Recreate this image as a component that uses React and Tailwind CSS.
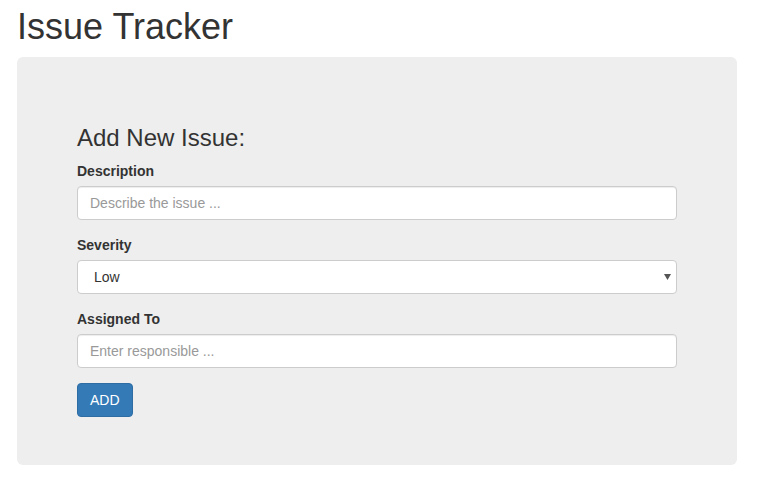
export default function App() {
  return (
    <div className="min-h-[479px] bg-white text-[#333] text-sm" style={{ fontFamily: '"Liberation Sans", Arial, sans-serif' }}>
      <div className="pl-[17px] pt-[7px]">
        <h1 className="text-[36px] leading-[40px] mb-[10px] font-normal">Issue Tracker</h1>
        <div className="w-[720px] bg-[#eeeeee] rounded-[6px] px-[60px] pt-[48px] pb-[48px]">
          <h3 className="text-[24px] leading-[26.4px] mt-[20px] mb-[10px]">Add New Issue:</h3>
          <form onSubmit={(e) => e.preventDefault()}>
            <div className="mb-[15px]">
              <label className="block font-bold leading-[20px] mb-[5px]">Description</label>
              <input
                className="block w-full h-[34px] px-[12px] bg-white border border-[#ccc] rounded-[4px] shadow-[inset_0_1px_1px_rgba(0,0,0,0.075)] placeholder:text-[#999] outline-none"
                placeholder="Describe the issue ..."
              />
            </div>
            <div className="mb-[15px]">
              <label className="block font-bold leading-[20px] mb-[5px]">Severity</label>
              <div className="relative">
                <select className="block w-full h-[34px] pl-[16px] pr-[24px] bg-white border border-[#ccc] rounded-[4px] appearance-none outline-none text-[#333]">
                  <option>Low</option>
                  <option>Medium</option>
                  <option>High</option>
                </select>
                <svg className="absolute right-[6px] top-[14px] pointer-events-none" width="7" height="6" viewBox="0 0 7 6">
                  <path d="M0 0H7L3.5 6Z" fill="#555" />
                </svg>
              </div>
            </div>
            <div className="mb-[15px]">
              <label className="block font-bold leading-[20px] mb-[5px]">Assigned To</label>
              <input
                className="block w-full h-[34px] px-[12px] bg-white border border-[#ccc] rounded-[4px] shadow-[inset_0_1px_1px_rgba(0,0,0,0.075)] placeholder:text-[#999] outline-none"
                placeholder="Enter responsible ..."
              />
            </div>
            <button
              type="submit"
              className="h-[34px] px-[12px] bg-[#337ab7] border border-[#2e6da4] rounded-[4px] text-white leading-[20px]"
            >
              ADD
            </button>
          </form>
        </div>
      </div>
    </div>
  );
}
